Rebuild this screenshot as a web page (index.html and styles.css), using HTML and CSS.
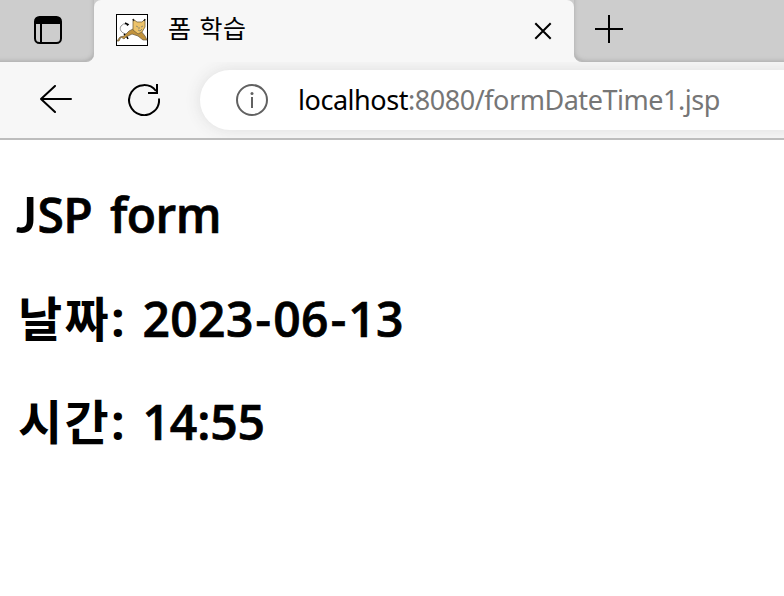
FILE: index.html
```html
<!DOCTYPE html>
<html lang="ko">
<head>
<meta charset="utf-8">
<title>폼 학습</title>
<link rel="stylesheet" href="styles.css">
</head>
<body>
<div class="browser">
  <header class="tabs">
    <div class="tab-actions">
      <svg width="28" height="28" viewBox="0 0 28 28"><rect x="1" y="1" width="26" height="26" rx="4.5" fill="none" stroke="#000" stroke-width="2"/><path d="M1 8V5a4 4 0 0 1 4-4h18a4 4 0 0 1 4 4v3z"/><path d="M7 8v19" stroke="#000" stroke-width="2"/></svg>
    </div>
    <div class="tab">
      <svg class="favicon" width="32" height="32" viewBox="0 0 32 32"><rect x=".5" y=".5" width="31" height="31" fill="#fff" stroke="#000"/><path d="M10 20C5 19 3 15 5 12q2-3 6-2" fill="none" stroke="#777" stroke-width=".8"/><path d="M9 9l3 1.5-1 1M8 20l3 3 1 2" fill="none" stroke="#000" stroke-width="1.5"/><path d="M1 27l3-4 4-1 5-5 6-3 6 3 4 5 2 4h-4l-5-4-6-2-6 3-2 2-3-2-2 4z" fill="#c1923c" stroke="#64583f" stroke-width=".7"/><path d="M17 5l4 3h5l3-3v8l-3 5-4 2-5-4z" fill="#edc36a" stroke="#77643e" stroke-width=".8"/><path d="M17 5l1 2M29 5l-1 2" stroke="#222" stroke-width="1.3"/><path d="M20 12l2 1m3 0 2-1M22 16l2 1 2-2M23 13v2" stroke="#777c70" stroke-width=".8" fill="none"/></svg>
      <span class="tab-title">폼 학습</span>
      <svg class="close" width="18" height="18" viewBox="0 0 18 18"><path d="M1.3 1.3l15.4 15.4M16.7 1.3L1.3 16.7" stroke="#000" stroke-width="2"/></svg>
    </div>
    <div class="new-tab">
      <svg width="28" height="28" viewBox="0 0 28 28"><path d="M0 14h28M14 0v28" stroke="#000" stroke-width="2"/></svg>
    </div>
  </header>
  <nav class="toolbar">
    <svg class="back" width="32" height="28" viewBox="0 0 32 28"><path d="M15 1L1 14l14 13M1 14h30" fill="none" stroke="#000" stroke-width="2" stroke-linecap="round" stroke-linejoin="round"/></svg>
    <svg class="reload" width="32" height="32" viewBox="0 0 32 32"><path d="M31 14.5A15 15 0 1 1 28 7" fill="none" stroke="#000" stroke-width="2"/><path d="M29 0v9h-9" fill="none" stroke="#000" stroke-width="2"/></svg>
    <div class="address">
      <svg width="32" height="32" viewBox="0 0 32 32"><circle cx="16" cy="16" r="15" fill="none" stroke="#616161" stroke-width="2"/><circle cx="16" cy="9.5" r="1.5" fill="#616161"/><path d="M16 13v11" stroke="#616161" stroke-width="2"/></svg>
      <span class="url"><span class="host">localhost</span><span class="path">:8080/formDateTime1.jsp</span></span>
    </div>
  </nav>
  <main class="page">
    <h2 class="heading"><span class="initial">J</span>SP form</h2>
    <h2><span class="label">날짜:</span><span class="date">2023<span class="dash">-</span>06<span class="dash">-</span>13</span></h2>
    <h2><span class="label">시간:</span><span class="time">14:55</span></h2>
  </main>
</div>
</body>
</html>
```
FILE: styles.css
```css
* { box-sizing: border-box; }
body { margin: 0; background: #fff; color: #000; }
svg { display: block; flex: none; }
.browser { width: 100%; height: 596px; overflow: hidden; }
.tabs { display: flex; height: 62px; background: #f7f7f7; }
.tab-actions, .new-tab { background: #cdcdcd; border-bottom: 1px solid #b8b8b8; }
.tab-actions { width: 94px; padding: 16px 0 0 34px; border-radius: 0 0 8px 0; box-shadow: inset -3px -3px 4px -3px #aaa; }
.new-tab { flex: 1; padding: 15px 0 0 21px; border-radius: 0 0 0 8px; box-shadow: inset 3px -3px 4px -3px #aaa; }
.tab { display: flex; width: 480px; padding: 14px 0 0 22px; background: linear-gradient(#cdcdcd, #cdcdcd) top / 100% 8px no-repeat; position: relative; isolation: isolate; }
.tab::before { content: ""; position: absolute; inset: 0; z-index: -1; background: #f7f7f7; border-radius: 7px 7px 0 0; }
.tab-title { width: 100px; margin: -2px 0 0 20px; font: 25px/30px "Noto Sans CJK KR", sans-serif; letter-spacing: .7px; white-space: nowrap; }
.close { margin: 8px 22px 0 auto; }
.toolbar { display: flex; height: 78px; background: #f7f7f7; border-bottom: 2px solid #bdbdbd; overflow: hidden; }
.back { margin: 23px 0 0 40px; }
.reload { margin: 22px 0 0 56px; }
.address { display: flex; flex: 1; height: 60px; margin: 8px -30px 0 40px; padding: 14px 0 0 36px; background: #fff; border-radius: 30px; box-shadow: 0 0 16px #dedede; }
.url { display: flex; margin: -1px 0 0 30px; font: 27px/34px "Noto Sans", sans-serif; letter-spacing: -.46px; white-space: nowrap; }
.path { color: #767676; }
.page { padding: 44px 16px 0; }
h2 { height: 60px; margin: 0 0 43px; font: 600 48px/60px "Open Sans", "Noto Sans CJK KR", sans-serif; -webkit-text-stroke: .7px #000; white-space: nowrap; }
.heading { margin-bottom: 45px; letter-spacing: -.6px; word-spacing: 6px; }
.initial { display: inline-block; width: 21.5px; font: 700 49px/60px Lato, sans-serif; -webkit-text-stroke: 0; }
.label { display: inline-block; width: 126.5px; padding-left: 2px; font-weight: 700; letter-spacing: 2.4px; -webkit-text-stroke: 0; }
.date { letter-spacing: .35px; }
.dash { display: inline-block; width: 19.5px; text-align: center; }
.time { letter-spacing: -.1px; }
```
